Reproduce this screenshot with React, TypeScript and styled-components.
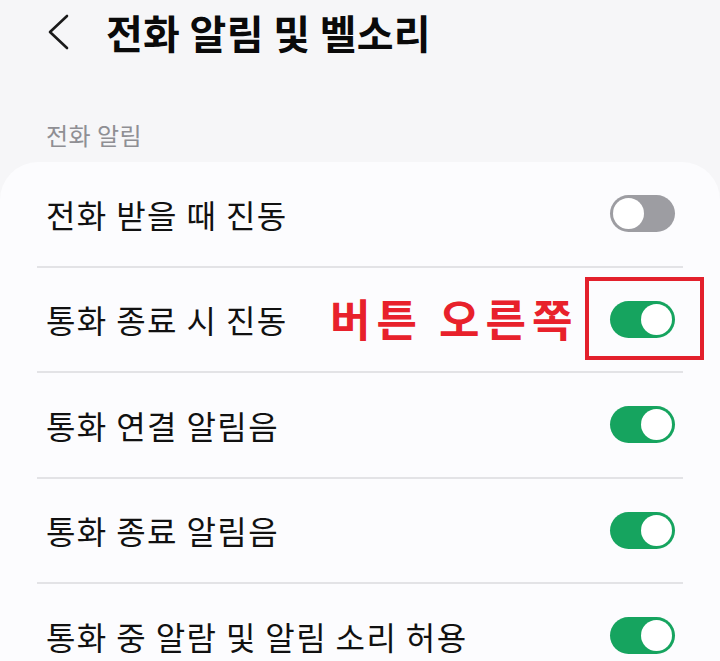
import styled, { createGlobalStyle } from "styled-components";

const GlobalStyle = createGlobalStyle`
  html, body {
    margin: 0;
    padding: 0;
    background: #f6f6f8;
    font-family: "Noto Sans CJK KR", "Noto Sans", sans-serif;
  }
`

const Page = styled.div`
  width: 720px;
  height: 661px;
  overflow: hidden;
  background: #f6f6f8;
`

const Header = styled.div`
  display: flex;
  align-items: center;
  height: 64px;
  padding-left: 46px;
  box-sizing: border-box;
`

const BackButton = styled.div`
  width: 28px;
  height: 40px;
  margin-right: 32px;
  display: flex;
  align-items: center;
`

const Title = styled.h1`
  margin: 0;
  font-size: 40px;
  font-weight: 700;
  color: #0a0a0a;
  letter-spacing: 0.3px;
`

const SectionLabel = styled.div`
  margin-top: 56px;
  padding-left: 46px;
  height: 30px;
  line-height: 30px;
  font-size: 24px;
  color: #8f8f94;
  letter-spacing: 0.5px;
  margin-bottom: 12px;
`

const Card = styled.div`
  background: #fcfcfe;
  border-radius: 38px 38px 0 0;
  padding: 0 37px;
`

const Row = styled.div<{ $last?: boolean }>`
  position: relative;
  display: flex;
  align-items: center;
  justify-content: space-between;
  height: 103.5px;
  padding: 0 8px 0 9px;
  border-bottom: ${p => (p.$last ? "none" : "2px solid #e3e3e6")};
`

const Label = styled.span`
  font-size: 32px;
  color: #111;
  letter-spacing: 1.4px;
`

const Track = styled.div<{ $on: boolean }>`
  position: relative;
  width: 65px;
  height: 37px;
  border-radius: 19px;
  background: ${p => (p.$on ? "#16a45f" : "#9d9da2")};
  flex-shrink: 0;
`

const Knob = styled.div<{ $on: boolean }>`
  position: absolute;
  top: 3px;
  ${p => (p.$on ? "right: 3px;" : "left: 3px;")}
  width: 31px;
  height: 31px;
  border-radius: 50%;
  background: #ffffff;
`

const Callout = styled.span`
  position: absolute;
  left: 293px;
  top: 50%;
  transform: translateY(-52%);
  font-size: 44px;
  font-weight: 700;
  color: #e8212b;
  letter-spacing: 6px;
  word-spacing: 0px;
`

const Highlight = styled.div`
  position: absolute;
  right: -21px;
  top: 9px;
  width: 119px;
  height: 83px;
  border: 4px solid #e3202c;
  box-sizing: border-box;
`

function Toggle({ on }: { on: boolean }) {
  return (
    <Track $on={on}>
      <Knob $on={on} />
    </Track>
  )
}

const rows = [
  { label: "전화 받을 때 진동", on: false },
  { label: "통화 종료 시 진동", on: true, marked: true },
  { label: "통화 연결 알림음", on: true },
  { label: "통화 종료 알림음", on: true },
  { label: "통화 중 알람 및 알림 소리 허용", on: true },
]

export default function App() {
  return (
    <Page>
      <GlobalStyle />
      <Header>
        <BackButton>
          <svg width="24" height="36" viewBox="0 0 24 36">
            <path d="M21 2 L4 18 L21 34" fill="none" stroke="#1a1a1a" strokeWidth="2.6" strokeLinecap="round" strokeLinejoin="round" />
          </svg>
        </BackButton>
        <Title>전화 알림 및 벨소리</Title>
      </Header>
      <SectionLabel>전화 알림</SectionLabel>
      <Card>
        {rows.map((r, i) => (
          <Row key={r.label} $last={i === rows.length - 1}>
            <Label>{r.label}</Label>
            {r.marked && <Callout>버튼 오른쪽</Callout>}
            <Toggle on={r.on} />
            {r.marked && <Highlight />}
          </Row>
        ))}
      </Card>
    </Page>
  )
}
